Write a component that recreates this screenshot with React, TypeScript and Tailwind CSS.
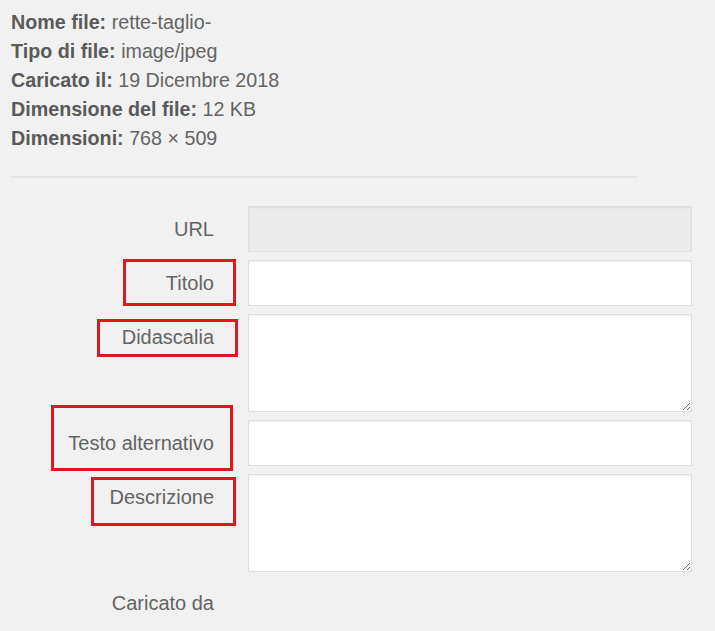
import React from "react";

const META: [string, string][] = [
	["Nome file:", "rette-taglio-"],
	["Tipo di file:", "image/jpeg"],
	["Caricato il:", "19 Dicembre 2018"],
	["Dimensione del file:", "12 KB"],
	["Dimensioni:", "768 × 509"],
];

const fieldBase =
	"block w-[444px] border border-[#dedede] shadow-[inset_0_1px_2px_rgba(0,0,0,0.07)] outline-none";

function Highlight({ className }: { className: string }) {
	return <div className={`absolute border-[3px] border-[#e5141d] pointer-events-none ${className}`} />;
}

export default function App() {
	return (
		<div className="min-h-screen bg-[#f1f1f1] font-['Liberation_Sans',Arial,sans-serif] text-[#646464] text-[20px]">
			{/* Attachment details */}
			<div className="pl-[11px] pt-[8px] leading-[29px] text-[19.7px]">
				{META.map(([label, value]) => (
					<div key={label}>
						<span className="font-bold text-[#5a5a5a]">{label}</span> {value}
					</div>
				))}
			</div>

			<div className="ml-[11px] mt-[23px] w-[626px] h-[2px] bg-[#e2e2e2]" />

			{/* Form */}
			<div className="mt-[28px] flex flex-col gap-[8px]">
				<div className="relative flex gap-[34px]">
					<div className="w-[214px] h-[46px] flex items-center justify-end">URL</div>
					<input readOnly className={`${fieldBase} h-[46px] bg-[#ebebeb]`} />
				</div>

				<div className="relative flex gap-[34px]">
					<Highlight className="left-[123px] top-[-1px] w-[113px] h-[47px]" />
					<div className="w-[214px] h-[46px] flex items-center justify-end">Titolo</div>
					<input className={`${fieldBase} h-[46px] bg-white`} />
				</div>

				<div className="relative flex gap-[34px]">
					<Highlight className="left-[97px] top-[5px] w-[141px] h-[38px]" />
					<div className="w-[214px] h-[46px] flex items-center justify-end">Didascalia</div>
					<textarea className={`${fieldBase} h-[98px] bg-white resize-y`} />
				</div>

				<div className="relative flex gap-[34px]">
					<Highlight className="left-[51px] top-[-15px] w-[182px] h-[66px]" />
					<div className="w-[214px] h-[46px] flex items-center justify-end">Testo alternativo</div>
					<input className={`${fieldBase} h-[46px] bg-white`} />
				</div>

				<div className="relative flex gap-[34px]">
					<Highlight className="left-[91px] top-[3px] w-[145px] h-[49px]" />
					<div className="w-[214px] h-[46px] flex items-center justify-end">Descrizione</div>
					<textarea className={`${fieldBase} h-[98px] bg-white resize-y`} />
				</div>

				<div className="relative flex gap-[34px]">
					<div className="w-[214px] h-[46px] flex items-center justify-end">Caricato da</div>
					<div className="w-[142px] h-[51px] mt-[3px] bg-[#f2f2f2]" />
				</div>
			</div>
		</div>
	);
}
